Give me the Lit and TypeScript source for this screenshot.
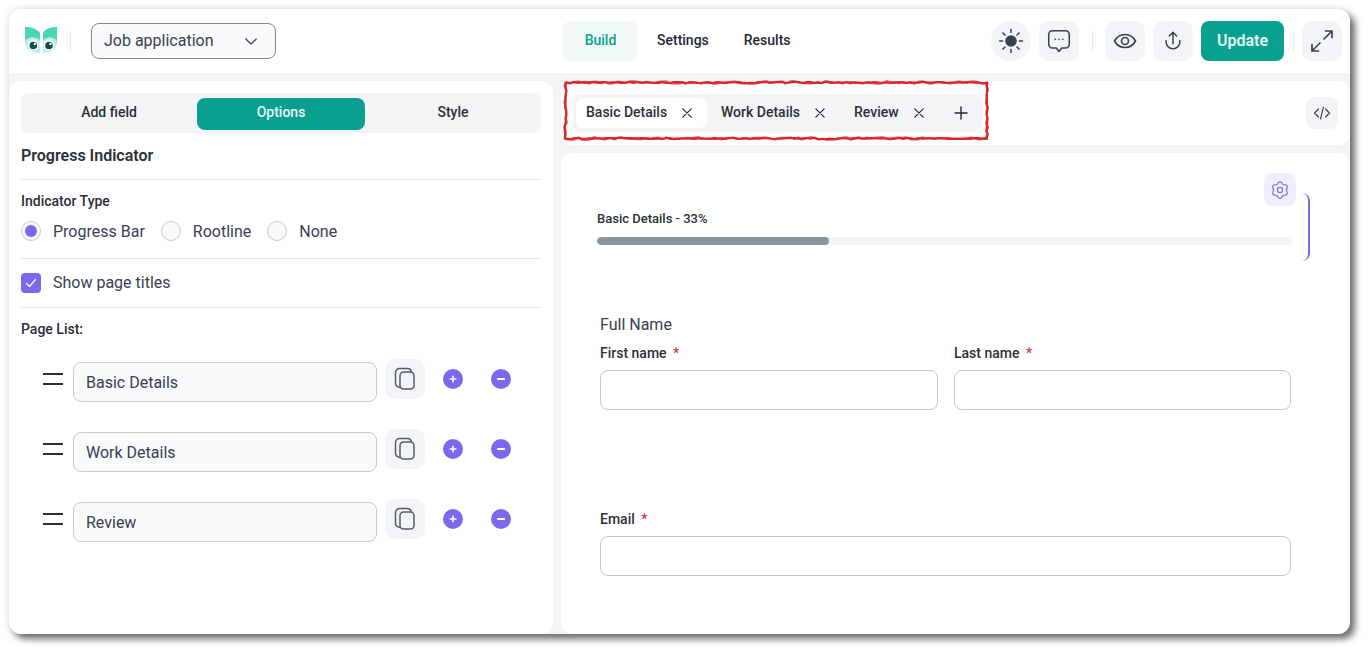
import { LitElement, html, css, svg } from 'lit';
import { customElement } from 'lit/decorators.js';

const pages = ['Basic Details', 'Work Details', 'Review'];

// hand-drawn looking outline for the red annotation
function roughBox(x0: number, y0: number, x1: number, y1: number, seed: number, amp: number) {
  let s = seed;
  const rnd = () => {
    s = (s * 9301 + 49297) % 233280;
    return s / 233280 - 0.5;
  };
  const corners = [[x0, y0], [x1, y0], [x1, y1], [x0, y1], [x0, y0]];
  let d = `M${x0} ${y0}`;
  for (let c = 1; c < corners.length; c++) {
    const [ax, ay] = corners[c - 1];
    const [bx, by] = corners[c];
    const n = Math.max(6, Math.round((Math.abs(bx - ax) + Math.abs(by - ay)) / 4));
    for (let i = 1; i <= n; i++) {
      const t = i / n;
      d += ` L${(ax + (bx - ax) * t + rnd() * amp).toFixed(1)} ${(ay + (by - ay) * t + rnd() * amp).toFixed(1)}`;
    }
  }
  return d;
}

// six lobed cog outline
function cogPath(cx: number, cy: number, r: number, a: number) {
  let d = '';
  for (let i = 0; i < 72; i++) {
    const t = (i / 72) * Math.PI * 2;
    const rr = r + a * Math.cos(6 * t);
    const x = cx + rr * Math.sin(t);
    const y = cy - rr * Math.cos(t);
    d += `${i ? 'L' : 'M'}${x.toFixed(2)} ${y.toFixed(2)}`;
  }
  return d + 'Z';
}

const closeIcon = html`<svg class="x" width="10" height="10" viewBox="0 0 10 10" fill="none" stroke="#1f2937" stroke-width="1.2" stroke-linecap="round"><path d="M.8.8l8.4 8.4M9.2.8L.8 9.2"/></svg>`;

const sunRays = [0, 45, 90, 135, 180, 225, 270, 315].map(
  (a) => svg`<path d="M12 2.2v2.6" transform="rotate(${a} 12 12)"/>`
);

@customElement('app-root')
export class AppRoot extends LitElement {
  static styles = css`
    :host {
      display: block;
      font-family: Roboto, 'Liberation Sans', sans-serif;
      color: #1f2937;
      background: #fff;
      height: 655px;
      padding: 9px 0 0 9px;
      box-sizing: border-box;
      position: relative;
      overflow: hidden;
    }
    .window {
      width: 1341px;
      height: 625px;
      border-radius: 12px;
      background: #f3f4f6;
      box-shadow: 5px 5px 7px rgba(0, 0, 0, 0.55), 0 0 8px rgba(0, 0, 0, 0.12);
      display: flex;
      flex-direction: column;
      overflow: hidden;
    }

    /* Header */
    .header {
      height: 64px;
      flex: none;
      background: #fff;
      display: flex;
      align-items: center;
      padding: 0 8px 0 15px;
    }
    .logo { display: block; }
    .vline { width: 1px; height: 20px; background: #e9eaec; flex: none; }
    .select {
      width: 185px;
      height: 36px;
      margin-left: 20px;
      box-sizing: border-box;
      border: 1px solid #85858c;
      border-radius: 8px;
      background: #f9fafb;
      display: flex;
      align-items: center;
      justify-content: space-between;
      padding: 0 18px 2px 12px;
      font-size: 16px;
      color: #374151;
    }
    .select svg { margin-top: 2px; }
    .nav { display: flex; align-items: center; margin-left: 287px; font-size: 14px; font-weight: 500; }
    .nav span { height: 40px; box-sizing: border-box; padding-bottom: 2px; display: flex; align-items: center; justify-content: center; border-radius: 8px; }
    .nav .on { width: 75px; background: #f0f9f7; color: #0aa08f; margin-right: 19px; }
    .nav .results { margin-left: 35px; }
    .actions { margin-left: auto; display: flex; align-items: center; }
    .ibtn {
      width: 40px;
      height: 40px;
      border-radius: 10px;
      background: #f3f4f8;
      display: flex;
      align-items: center;
      justify-content: center;
      flex: none;
    }
    .round { border-radius: 50%; }
    .update {
      width: 83px;
      height: 40px;
      box-sizing: border-box;
      padding-bottom: 2px;
      border-radius: 8px;
      background: #09a08f;
      color: #e8fbf7;
      font-size: 16px;
      font-weight: 600;
      display: flex;
      align-items: center;
      justify-content: center;
      margin-left: 8px;
    }

    /* Panels */
    .body { flex: 1; display: flex; gap: 8px; margin-top: 8px; min-height: 0; }
    .left {
      width: 544px;
      flex: none;
      box-sizing: border-box;
      background: #fff;
      border-radius: 12px;
      padding: 12px;
    }
    .right { flex: 1; display: flex; flex-direction: column; gap: 8px; min-width: 0; }

    .seg {
      height: 40px;
      box-sizing: border-box;
      background: #f3f4f6;
      border-radius: 8px;
      padding: 5px 4px 3px;
      display: grid;
      grid-template-columns: repeat(3, 168px);
      gap: 4px;
    }
    .seg div {
      display: flex;
      align-items: center;
      justify-content: center;
      padding-bottom: 4px;
      box-sizing: border-box;
      font-size: 14px;
      font-weight: 500;
      border-radius: 8px;
      color: #2b303a;
    }
    .seg .on { background: #09a08f; color: #e8fbf7; }
    h3 { margin: 13px 0 0; font-size: 16px; line-height: 20px; font-weight: 600; color: #2b303a; }
    .hr { height: 1px; background: #e3e4e6; }
    .label { font-size: 14px; line-height: 16px; font-weight: 500; color: #2b303a; }
    .radios { display: flex; align-items: center; margin-top: 11px; font-size: 16px; color: #374151; }
    .radio {
      width: 20px;
      height: 20px;
      box-sizing: border-box;
      border-radius: 50%;
      border: 1px solid #c9cace;
      background: #f9fafb;
      margin-right: 12px;
      display: flex;
      align-items: center;
      justify-content: center;
      flex: none;
    }
    .radio i { width: 12px; height: 12px; border-radius: 50%; background: #7b68ee; }
    .radios span { margin-right: 16px; line-height: 20px; padding-top: 2px; }
    .check { display: flex; align-items: center; font-size: 16px; color: #374151; height: 20px; margin: 14px 0; }
    .check span { padding-bottom: 2px; }
    .box {
      width: 20px;
      height: 20px;
      border-radius: 4px;
      background: #7b68ee;
      margin-right: 12px;
      display: flex;
      align-items: center;
      justify-content: center;
    }
    .pages { margin-top: 22px; display: flex; flex-direction: column; gap: 30px; }
    .row { display: flex; align-items: flex-start; height: 40px; padding-left: 22px; }
    .grip {
      width: 20px;
      height: 12px;
      margin: 14px 10px 0 0;
      border-top: 2px solid #2a2f38;
      border-bottom: 2px solid #2a2f38;
      box-sizing: border-box;
      flex: none;
    }
    .pinput {
      width: 304px;
      height: 40px;
      margin-top: 3px;
      box-sizing: border-box;
      border: 1px solid #c9cacd;
      border-radius: 8px;
      background: #f9fafb;
      display: flex;
      align-items: center;
      padding-left: 12px;
      font-size: 16px;
      color: #374151;
    }
    .row .ibtn { margin-left: 8px; }
    .dot {
      width: 20px;
      height: 20px;
      border-radius: 50%;
      background: #7b68ee;
      margin-top: 10px;
      display: flex;
      align-items: center;
      justify-content: center;
      flex: none;
    }
    .dot.plus { margin-left: 18px; }
    .dot.minus { margin-left: 28px; }

    /* Tab bar */
    .tabbar {
      height: 64px;
      flex: none;
      background: #fff;
      border-radius: 12px;
      display: flex;
      align-items: center;
      justify-content: space-between;
      padding: 0 12px;
      box-sizing: border-box;
    }
    .tabs {
      height: 38px;
      width: 409px;
      box-sizing: border-box;
      background: #f3f4f6;
      border-radius: 8px;
      padding: 4px 3px;
      display: flex;
      align-items: center;
      font-size: 14px;
      font-weight: 500;
      color: #2b303a;
    }
    .tab { height: 30px; display: flex; align-items: center; border-radius: 8px; }
    .tab span { padding-bottom: 2px; }
    .tab .x { margin-left: 15px; }
    .tab.on { background: #fff; width: 131px; padding-left: 10px; box-sizing: border-box; margin-right: 14px; }
    .tab.t2 { margin-right: 29px; }
    .add { margin-left: 30px; display: block; }
    .code { width: 32px; height: 32px; border-radius: 8px; background: #f3f4f8; display: flex; align-items: center; justify-content: center; }

    /* Form */
    .main { flex: 1; background: #fff; border-radius: 12px; min-height: 0; padding-top: 40px; box-sizing: border-box; }
    .progress {
      position: relative;
      height: 68px;
      box-sizing: border-box;
      margin: 0 40px 0 24px;
      padding: 18px 16px 0 12px;
      border-right: 2px solid #7c6fdc;
      border-radius: 8px;
    }
    .ptext { font-size: 13px; line-height: 15px; font-weight: 500; color: #2b303a; }
    .track { height: 8px; margin-top: 11px; background: #f3f4f6; border-radius: 4px; overflow: hidden; }
    .fill { height: 100%; background: #8d94a1; border-radius: 4px; }
    .gear {
      position: absolute;
      top: -20px;
      right: 12px;
      width: 32px;
      height: 33px;
      border-radius: 8px;
      background: #f0eefd;
      display: flex;
      align-items: center;
      justify-content: center;
    }
    .fields { margin: 54px 0 0 39px; width: 691px; }
    .group { font-size: 16px; line-height: 20px; color: #374151; }
    .cols { display: grid; grid-template-columns: 338px 337px; gap: 16px; margin-top: 10px; }
    .flabel { font-size: 14px; line-height: 16px; font-weight: 500; color: #2b303a; margin-bottom: 9px; }
    .flabel b { color: #d9363e; font-weight: 500; margin-left: 3px; }
    .input { height: 40px; box-sizing: border-box; border: 1px solid #c6c7ca; border-radius: 8px; background: #fff; }
    .email { margin-top: 101px; }

    .mark { position: absolute; left: 0; top: 0; pointer-events: none; }
  `;

  render() {
    return html`
      <div class="window">
        <div class="header">
          ${this.logo()}
          <div class="vline" style="margin-left:12px"></div>
          <div class="select">
            Job application
            <svg width="12" height="7" viewBox="0 0 12 7" fill="none" stroke="#374151" stroke-width="1.2" stroke-linecap="round" stroke-linejoin="round"><path d="M.8 1L6 6l5.200-5"/></svg>
          </div>
          <div class="nav">
            <span class="on">Build</span>
            <span>Settings</span>
            <span class="results">Results</span>
          </div>
          <div class="actions">
            <div class="ibtn round">
              <svg width="28" height="28" viewBox="0 0 24 24" fill="none" stroke="#374151" stroke-width="1.3" stroke-linecap="round">
                ${sunRays}<circle cx="12" cy="12" r="5" fill="#374151" stroke="none"/>
              </svg>
            </div>
            <div class="ibtn" style="margin-left:8px">
              <svg width="26" height="26" viewBox="0 0 24 24" fill="none" stroke="#374151" stroke-width="1.4" stroke-linejoin="round">
                <path d="M6 2.500h12a3.500 3.500 0 013.500 3.500v9a3.500 3.500 0 01-3.500 3.500h-3.500L12 21.700l-2.500-3.200H6A3.500 3.500 0 012.500 15V6A3.500 3.500 0 016 2.500z"/>
                <path d="M8.500 10.500h.01M12 10.500h.01M15.500 10.500h.01" stroke-width="1.500" stroke-linecap="round"/>
              </svg>
            </div>
            <div class="vline" style="margin:0 12px 0 13px"></div>
            <div class="ibtn">
              <svg width="24" height="24" viewBox="0 0 24 24" fill="none" stroke="#374151" stroke-width="1.600">
                <path d="M1.500 12C4 7.500 7.700 5.500 12 5.500S20 7.500 22.500 12C20 16.500 16.300 18.500 12 18.500S4 16.500 1.500 12z"/>
                <circle cx="12" cy="12" r="3.500"/>
              </svg>
            </div>
            <div class="ibtn" style="margin-left:8px">
              <svg width="22" height="22" viewBox="0 0 24 24" fill="none" stroke="#374151" stroke-width="1.600" stroke-linecap="round" stroke-linejoin="round">
                <path d="M12 15V3M8 6.500L12 2.500l4 4"/>
                <path d="M4.500 11.500v1.500a7.500 7.500 0 0015 0v-1.500"/>
              </svg>
            </div>
            <div class="update">Update</div>
            <div class="vline" style="margin:0 8px 0 9px"></div>
            <div class="ibtn">
              <svg width="24" height="24" viewBox="0 0 24 24" fill="none" stroke="#374151" stroke-width="1.700" stroke-linecap="round" stroke-linejoin="round">
                <path d="M14 10L22 2M15.500 2H22v6.500M10 14l-8 8M2 15.500V22h6.500"/>
              </svg>
            </div>
          </div>
        </div>

        <div class="body">
          <div class="left">
            <div class="seg">
              <div>Add field</div>
              <div class="on">Options</div>
              <div>Style</div>
            </div>
            <h3>Progress Indicator</h3>
            <div class="hr" style="margin-top:13px"></div>
            <div class="label" style="margin-top:13px">Indicator Type</div>
            <div class="radios">
              <div class="radio"><i></i></div><span>Progress Bar</span>
              <div class="radio"></div><span>Rootline</span>
              <div class="radio"></div><span>None</span>
            </div>
            <div class="hr" style="margin-top:16px"></div>
            <div class="check">
              <div class="box">
                <svg width="14" height="14" viewBox="0 0 14 14" fill="none" stroke="#fff" stroke-width="1.300" stroke-linecap="round" stroke-linejoin="round"><path d="M2.500 7.500l3 3 6-7"/></svg>
              </div>
              <span>Show page titles</span>
            </div>
            <div class="hr"></div>
            <div class="label" style="margin-top:13px">Page List:</div>
            <div class="pages">
              ${pages.map((p) => this.pageRow(p))}
            </div>
          </div>

          <div class="right">
            <div class="tabbar">
              <div class="tabs">
                <div class="tab on"><span>Basic Details</span>${closeIcon}</div>
                <div class="tab t2"><span>Work Details</span>${closeIcon}</div>
                <div class="tab t3"><span>Review</span>${closeIcon}</div>
                <svg class="add" width="14" height="14" viewBox="0 0 14 14" fill="none" stroke="#1f2937" stroke-width="1.400" stroke-linecap="round"><path d="M7 1v12M1 7h12"/></svg>
              </div>
              <div class="code">
                <svg width="18" height="18" viewBox="0 0 18 18" fill="none" stroke="#374151" stroke-width="1.100" stroke-linecap="round" stroke-linejoin="round"><path d="M5.500 5L1.500 9l4 4M12.500 5l4 4-4 4M10.500 3L7.500 15"/></svg>
              </div>
            </div>
            <div class="main">
              <div class="progress">
                <div class="gear">
                  <svg width="20" height="20" viewBox="0 0 20 20" fill="none" stroke="#7c6fdc" stroke-width="1.200" stroke-linejoin="round">
                    <path d="${cogPath(10, 10, 7.300, 0.900)}"/>
                    <circle cx="10" cy="10" r="2.600"/>
                  </svg>
                </div>
                <div class="ptext">Basic Details - 33%</div>
                <div class="track"><div class="fill" style="width:${(232 / 695) * 100}%"></div></div>
              </div>
              <div class="fields">
                <div class="group">Full Name</div>
                <div class="cols">
                  <div><div class="flabel">First name <b>*</b></div><div class="input"></div></div>
                  <div><div class="flabel">Last name <b>*</b></div><div class="input"></div></div>
                </div>
                <div class="email">
                  <div class="flabel">Email <b>*</b></div>
                  <div class="input"></div>
                </div>
              </div>
            </div>
          </div>
        </div>
      </div>
      <svg class="mark" width="1371" height="655" fill="none" stroke="#d9232b" stroke-linejoin="round">
        <path d="${roughBox(565.500, 82.500, 987, 138.500, 17, 2.200)}" stroke-width="2.400" opacity="0.85"/>
        <path d="${roughBox(565.500, 82.500, 987, 138.500, 91, 1.400)}" stroke-width="1.800"/>
      </svg>
    `;
  }

  logo() {
    return html`<svg class="logo" width="34" height="28" viewBox="0 0 34 28">
      <path d="M1 0c6 0 12 2 15 6v20c-3 0-8-1-11-3-3-2-4-5-4-8z" fill="#bdeee1"/>
      <path d="M33 0c-6 0-12 2-14 6v20c3 0 7-1 10-3 3-2 4-5 4-8z" fill="#bdeee1"/>
      <path d="M1 0c6 0 12 2 15 6v7c-3-2-6-3-9-2.500-3 .5-5 2-6 4z" fill="#48d6b4"/>
      <path d="M33 0c-6 0-12 2-14 6v7c3-2 5-3 8-2.500 3 .5 5 2 6 4z" fill="#48d6b4"/>
      <circle cx="9.300" cy="18" r="5.400" fill="#fff"/>
      <circle cx="9.300" cy="18.500" r="3.800" fill="#0f4c55"/>
      <circle cx="10.800" cy="17" r="1.200" fill="#fff"/>
      <circle cx="25" cy="18" r="5.400" fill="#fff"/>
      <circle cx="25" cy="18.500" r="3.800" fill="#0f4c55"/>
      <circle cx="26.500" cy="17" r="1.200" fill="#fff"/>
    </svg>`;
  }

  pageRow(name: string) {
    return html`<div class="row">
      <div class="grip"></div>
      <div class="pinput">${name}</div>
      <div class="ibtn">
        <svg width="24" height="24" viewBox="0 0 24 24" fill="none" stroke="#565d69" stroke-width="1.500" stroke-linejoin="round">
          <rect x="7" y="5" width="14" height="17" rx="3.500"/>
          <path d="M7 20.500C4 20 2.500 18.500 2.500 16V5.500A4 4 0 016.500 1.500h8c2 0 3.500 1.200 4 3.500"/>
        </svg>
      </div>
      <div class="dot plus">
        <svg width="10" height="10" viewBox="0 0 10 10" fill="none" stroke="#fff" stroke-width="1.600" stroke-linecap="round"><path d="M5 2.200v5.600M2.200 5h5.600"/></svg>
      </div>
      <div class="dot minus">
        <svg width="10" height="10" viewBox="0 0 10 10" fill="none" stroke="#fff" stroke-width="1.800" stroke-linecap="round"><path d="M1.800 5h6.400"/></svg>
      </div>
    </div>`;
  }
}
